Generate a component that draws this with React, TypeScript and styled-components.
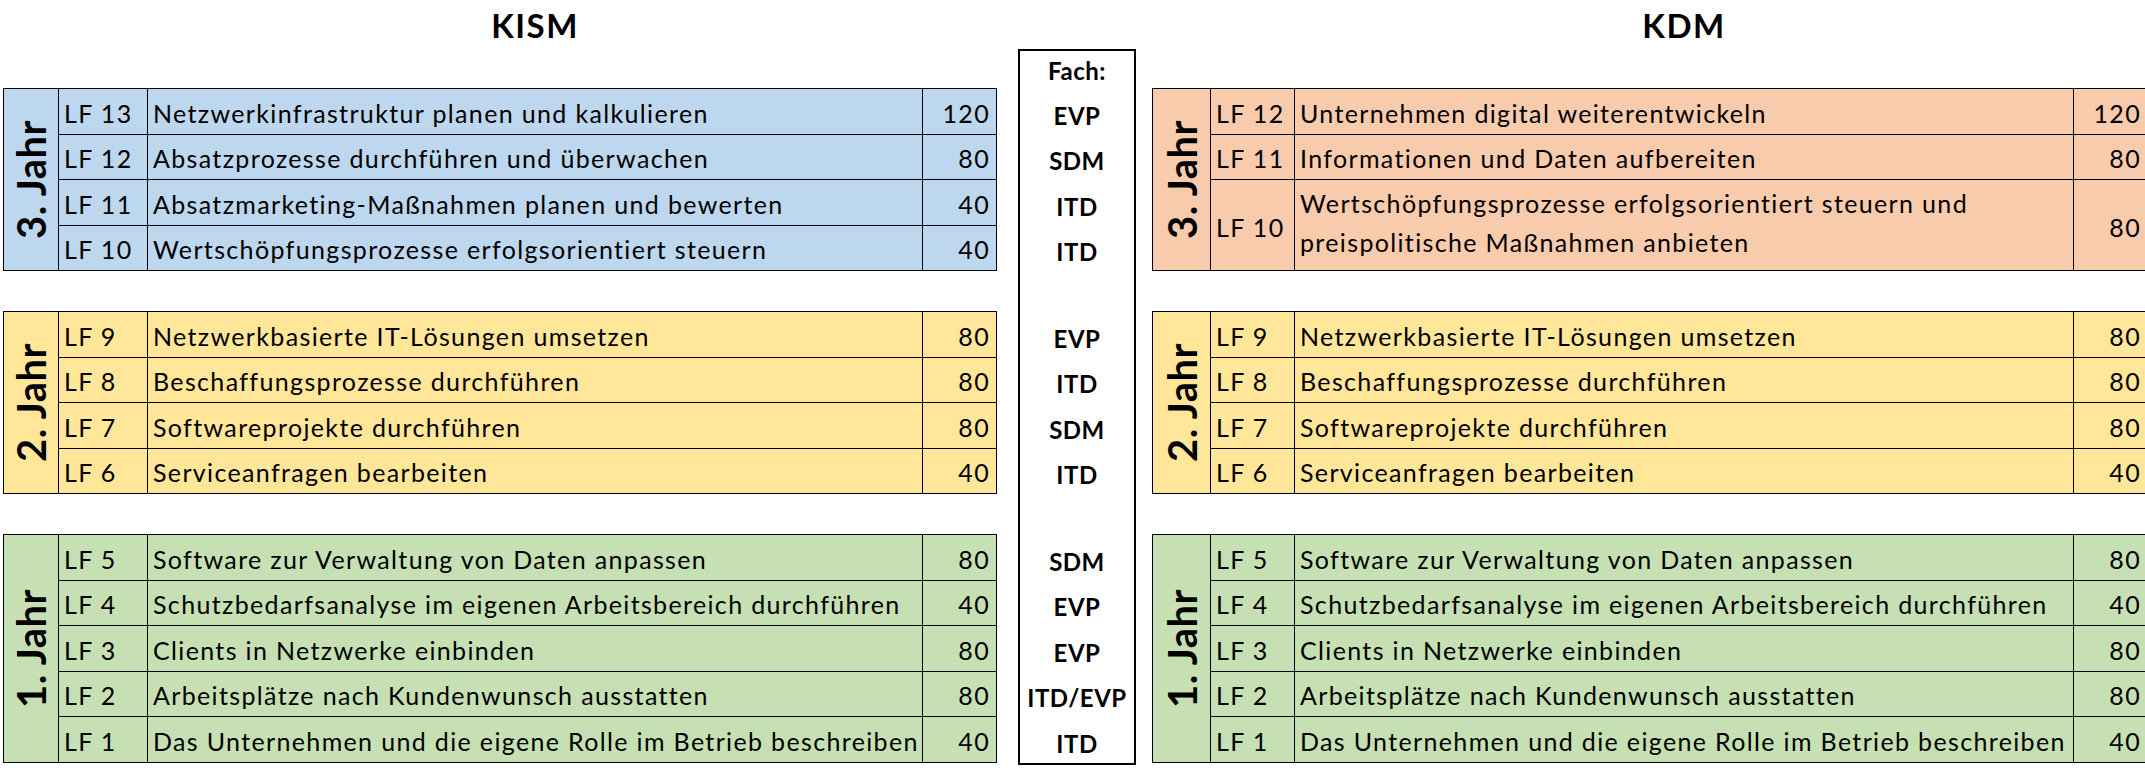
import styled, { createGlobalStyle } from 'styled-components';

const GlobalStyle = createGlobalStyle`
  html, body {
    margin: 0;
    padding: 0;
    background: #ffffff;
  }
  body {
    font-family: Lato, "Liberation Sans", sans-serif;
    color: #000000;
  }
`;

type Row = { lf: string; title: string; hours: number; lines?: number };
type Block = { year: string; color: string; rows: Row[] };
type Side = { name: string; cols: number[]; blocks: Block[] };

const ROW = 44.5;
const rowHeight = (lines = 1) => lines * ROW + (lines - 1);

const BLUE = '#bdd7ee';
const ORANGE = '#f8cbad';
const YELLOW = '#ffe699';
const GREEN = '#c6e0b4';

const secondYear: Block = {
  year: '2. Jahr',
  color: YELLOW,
  rows: [
    { lf: 'LF 9', title: 'Netzwerkbasierte IT-Lösungen umsetzen', hours: 80 },
    { lf: 'LF 8', title: 'Beschaffungsprozesse durchführen', hours: 80 },
    { lf: 'LF 7', title: 'Softwareprojekte durchführen', hours: 80 },
    { lf: 'LF 6', title: 'Serviceanfragen bearbeiten', hours: 40 },
  ],
};

const firstYear: Block = {
  year: '1. Jahr',
  color: GREEN,
  rows: [
    { lf: 'LF 5', title: 'Software zur Verwaltung von Daten anpassen', hours: 80 },
    { lf: 'LF 4', title: 'Schutzbedarfsanalyse im eigenen Arbeitsbereich durchführen', hours: 40 },
    { lf: 'LF 3', title: 'Clients in Netzwerke einbinden', hours: 80 },
    { lf: 'LF 2', title: 'Arbeitsplätze nach Kundenwunsch ausstatten', hours: 80 },
    { lf: 'LF 1', title: 'Das Unternehmen und die eigene Rolle im Betrieb beschreiben', hours: 40 },
  ],
};

const kism: Side = {
  name: 'KISM',
  cols: [54, 88, 774, 73],
  blocks: [
    {
      year: '3. Jahr',
      color: BLUE,
      rows: [
        { lf: 'LF 13', title: 'Netzwerkinfrastruktur planen und kalkulieren', hours: 120 },
        { lf: 'LF 12', title: 'Absatzprozesse durchführen und überwachen', hours: 80 },
        { lf: 'LF 11', title: 'Absatzmarketing-Maßnahmen planen und bewerten', hours: 40 },
        { lf: 'LF 10', title: 'Wertschöpfungsprozesse erfolgsorientiert steuern', hours: 40 },
      ],
    },
    secondYear,
    firstYear,
  ],
};

const kdm: Side = {
  name: 'KDM',
  cols: [57, 83, 778, 73],
  blocks: [
    {
      year: '3. Jahr',
      color: ORANGE,
      rows: [
        { lf: 'LF 12', title: 'Unternehmen digital weiterentwickeln', hours: 120 },
        { lf: 'LF 11', title: 'Informationen und Daten aufbereiten', hours: 80 },
        {
          lf: 'LF 10',
          title: 'Wertschöpfungsprozesse erfolgsorientiert steuern und\npreispolitische Maßnahmen anbieten',
          hours: 80,
          lines: 2,
        },
      ],
    },
    secondYear,
    firstYear,
  ],
};

const subjects = [
  ['EVP', 'SDM', 'ITD', 'ITD'],
  ['EVP', 'ITD', 'SDM', 'ITD'],
  ['SDM', 'EVP', 'EVP', 'ITD/EVP', 'ITD'],
];

export default function App() {
  return (
    <>
      <GlobalStyle />
      <Page>
        <Curriculum side={kism} />
        <FachBox>
          <FachHead>Fach:</FachHead>
          <FachBody>
            {subjects.map((group, i) => (
              <FachGroup key={i}>
                {group.map((s, j) => (
                  <FachCell key={j}>{s}</FachCell>
                ))}
              </FachGroup>
            ))}
          </FachBody>
        </FachBox>
        <Curriculum side={kdm} />
      </Page>
    </>
  );
}

const Curriculum = ({ side }: { side: Side }) => {
  const [yearW, lfW, textW] = side.cols;
  return (
    <SideColumn>
      <Heading style={{ marginLeft: yearW + lfW + 3, width: textW }}>{side.name}</Heading>
      <Blocks>
        {side.blocks.map((block) => (
          <Table
            key={block.year}
            $cols={side.cols.map((c) => `${c}px`).join(' ')}
            $rows={block.rows.map((r) => `${rowHeight(r.lines)}px`).join(' ')}
            $fill={block.color}
          >
            <YearCell>
              <YearLabel>{block.year}</YearLabel>
            </YearCell>
            {block.rows.map((r) => (
              <RowCells key={r.lf} row={r} />
            ))}
          </Table>
        ))}
      </Blocks>
    </SideColumn>
  );
};

const RowCells = ({ row }: { row: Row }) => (
  <>
    <LfCell>{row.lf}</LfCell>
    <TitleCell $multi={(row.lines ?? 1) > 1}>{row.title}</TitleCell>
    <HoursCell>{row.hours}</HoursCell>
  </>
);

const Page = styled.div`
  display: flex;
  align-items: flex-start;
  width: 2145px;
  height: 770px;
  padding-left: 3px;
  box-sizing: border-box;
  overflow: hidden;
`;

const SideColumn = styled.div`
  display: flex;
  flex-direction: column;
  flex-shrink: 0;
`;

const Heading = styled.div`
  height: 88px;
  line-height: 50px;
  text-align: center;
  font-size: 33px;
  font-weight: 700;
  letter-spacing: 1.5px;
`;

const Blocks = styled.div`
  display: flex;
  flex-direction: column;
  gap: 40px;
`;

const Table = styled.div<{ $cols: string; $rows: string; $fill: string }>`
  display: grid;
  grid-template-columns: ${(p) => p.$cols};
  grid-template-rows: ${(p) => p.$rows};
  gap: 1px;
  padding: 1px;
  background: #000000;
  width: max-content;

  & > div {
    background: ${(p) => p.$fill};
  }
`;

const YearCell = styled.div`
  grid-row: 1 / -1;
  display: flex;
  align-items: center;
  justify-content: center;
`;

const YearLabel = styled.span`
  writing-mode: vertical-rl;
  transform: rotate(180deg);
  font-size: 40px;
  font-weight: 700;
  letter-spacing: 0.5px;
  line-height: 1;
  white-space: nowrap;
`;

const TextCell = styled.div`
  display: flex;
  align-items: center;
  box-sizing: border-box;
  padding-top: 3px;
  font-size: 25px;
  letter-spacing: 1.35px;
  white-space: nowrap;
  overflow: hidden;
`;

const LfCell = styled(TextCell)`
  padding-left: 5px;
`;

const TitleCell = styled(TextCell)<{ $multi: boolean }>`
  padding-left: 5px;
  white-space: pre-line;
  line-height: ${(p) => (p.$multi ? '39px' : 'normal')};
  padding-top: ${(p) => (p.$multi ? '0' : '3px')};
  padding-bottom: ${(p) => (p.$multi ? '4px' : '0')};
`;

const HoursCell = styled(TextCell)`
  justify-content: flex-end;
  padding-right: 6px;
`;

const FachBox = styled.div`
  flex-shrink: 0;
  box-sizing: border-box;
  width: 118px;
  height: 715.5px;
  margin: 49px 16px 0 21px;
  border: 2px solid #000000;
  display: flex;
  flex-direction: column;
`;

const FachHead = styled.div`
  height: 37px;
  display: flex;
  align-items: center;
  justify-content: center;
  padding-top: 2px;
  box-sizing: border-box;
  font-size: 24px;
  font-weight: 700;
  letter-spacing: 0.5px;
`;

const FachBody = styled.div`
  display: flex;
  flex-direction: column;
  gap: 40px;
`;

const FachGroup = styled.div`
  display: flex;
  flex-direction: column;
  gap: 1px;
  padding: 1px 0;
`;

const FachCell = styled.div`
  height: ${ROW}px;
  display: flex;
  align-items: center;
  justify-content: center;
  box-sizing: border-box;
  padding-top: 8px;
  font-size: 24px;
  font-weight: 700;
  letter-spacing: 0.5px;
`;
